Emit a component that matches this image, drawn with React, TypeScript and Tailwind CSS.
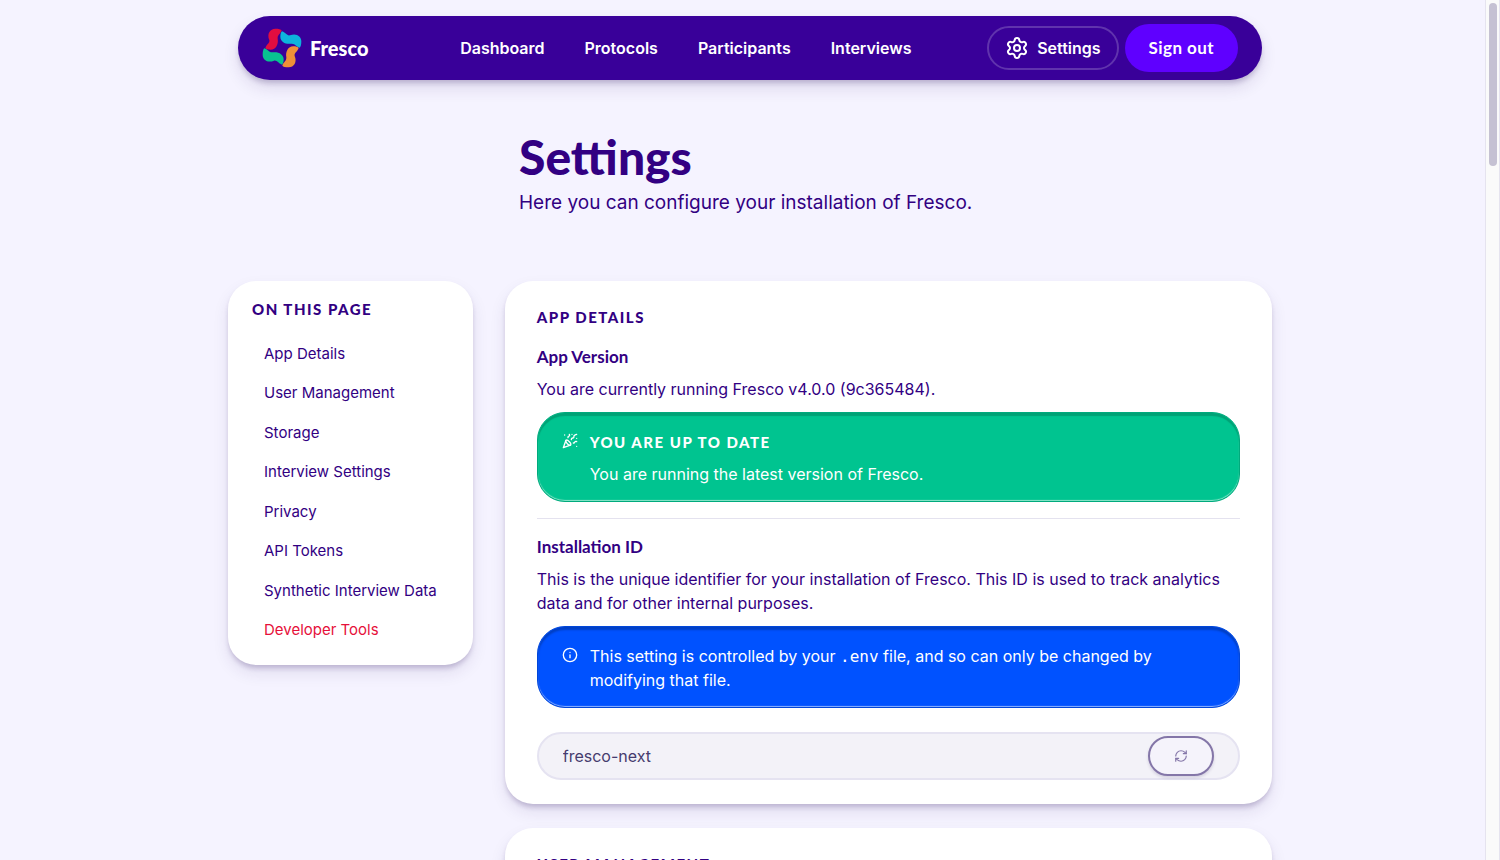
import { clsx } from "clsx";
import { Info, PartyPopper, RefreshCw, Settings } from "lucide-react";
import type { ReactNode } from "react";

const NAV_ITEMS = ["Dashboard", "Protocols", "Participants", "Interviews"];

const SECTIONS = [
  { id: "app-details", title: "App Details" },
  { id: "user-management", title: "User Management" },
  { id: "storage", title: "Storage" },
  { id: "interview-settings", title: "Interview Settings" },
  { id: "privacy", title: "Privacy" },
  { id: "api-tokens", title: "API Tokens" },
  { id: "synthetic-interview-data", title: "Synthetic Interview Data" },
  { id: "developer-tools", title: "Developer Tools", danger: true },
];

const LOGO_ARM =
  "M-50 0C-46 -12 -36 -14 -38 -24C-46 -42 -36 -58 -20 -58C-10 -58 -3 -56 -1 -53C-4 -42 -14 -40 -13 -28C-10 -12 -18 5 -34 5C-42 5 -48 3 -50 0Z";

function Logo() {
  return (
    <svg viewBox="-60 -60 120 120" className="size-10" aria-hidden="true">
      <path d={LOGO_ARM} fill="#e20d40" />
      <path d={LOGO_ARM} fill="#0db4dc" transform="rotate(90)" />
      <path d={LOGO_ARM} fill="#ef9038" transform="rotate(180)" />
      <path d={LOGO_ARM} fill="#08c391" transform="rotate(270)" />
    </svg>
  );
}

function Heading({ children }: { children: ReactNode }) {
  return (
    <h2 className="font-['Lato',sans-serif] text-[15px] leading-6 font-black tracking-widest uppercase">
      {children}
    </h2>
  );
}

function Card({ id, title, children }: { id: string; title: string; children?: ReactNode }) {
  return (
    <section
      id={id}
      className="rounded-[28px] bg-white px-8 py-6 shadow-[0_4px_5px_-1px_rgba(48,25,95,0.22),0_8px_16px_rgba(48,25,95,0.1)]"
    >
      <Heading>{title}</Heading>
      {children}
    </section>
  );
}

function Field({ title, text, children }: { title: string; text: string; children: ReactNode }) {
  return (
    <div>
      <h3 className="font-['Lato',sans-serif] text-[17px] leading-6 font-bold">{title}</h3>
      <p className="mt-2 mb-[11px] leading-6">{text}</p>
      {children}
    </div>
  );
}

function Alert({
  variant,
  icon,
  children,
}: {
  variant: "success" | "info";
  icon: ReactNode;
  children: ReactNode;
}) {
  return (
    <div
      role="status"
      className={clsx(
        "flex gap-3 rounded-[28px] border px-6 pt-[17px] pb-[15px] leading-6 text-white",
        variant === "success" &&
          "border-[#00aa7d] bg-[#00c490] shadow-[inset_0_3px_1px_#00a276,inset_0_-1px_1px_#8ee6cb]",
        variant === "info" &&
          "border-[#0046da] bg-[#0052ff] shadow-[inset_0_3px_2px_#003fc4,inset_0_-1px_1px_#8fb4ff]",
      )}
    >
      <span className="flex h-6 shrink-0 items-start pt-[3px]">{icon}</span>
      <div>{children}</div>
    </div>
  );
}

function Header() {
  return (
    <header className="mx-auto flex h-16 max-w-5xl items-center justify-between rounded-full bg-[#390099] px-6 text-white shadow-[0_4px_5px_-1px_rgba(48,25,95,0.22),0_8px_16px_rgba(48,25,95,0.12)]">
      <a
        href="#"
        className="flex items-center gap-2 pr-4 font-['Lato',sans-serif] text-xl font-black"
      >
        <Logo />
        Fresco
      </a>
      <nav className="flex gap-10 font-semibold">
        {NAV_ITEMS.map((item) => (
          <a key={item} href="#">
            {item}
          </a>
        ))}
      </nav>
      <div className="flex items-center gap-1.5">
        <a
          href="#"
          className="flex h-11 items-center gap-2 rounded-full border-2 border-white/20 px-4 font-semibold"
        >
          <Settings className="size-6" aria-hidden="true" />
          Settings
        </a>
        <button
          type="button"
          className="h-12 rounded-full bg-[#5f00ff] px-6 font-['Lato',sans-serif] text-[17px] font-bold tracking-wide"
        >
          Sign out
        </button>
      </div>
    </header>
  );
}

export default function App() {
  return (
    <div className="relative h-screen overflow-hidden bg-[#f5f3ff] pt-4 font-['Inter',sans-serif] text-base text-[#320082]">
      <Header />

      <div className="mx-auto mt-12 max-w-[462px]">
        <h1 className="font-['Lato',sans-serif] text-5xl leading-[58px] font-black">Settings</h1>
        <p className="text-[19px] leading-[34px]">
          Here you can configure your installation of Fresco.
        </p>
      </div>

      <div className="mx-auto mt-[61px] flex max-w-[1044px] items-start gap-8">
        <aside className="flex-1 rounded-[28px] bg-white px-6 pt-4 pb-[19px] shadow-[0_4px_5px_-1px_rgba(48,25,95,0.22),0_8px_16px_rgba(48,25,95,0.1)]">
          <Heading>On this page</Heading>
          <ul className="mt-[17px] flex min-h-[308px] flex-col justify-between">
            {SECTIONS.map((section) => (
              <li key={section.id}>
                <a
                  href={`#${section.id}`}
                  className={clsx(
                    "block px-3 py-1.5 text-[15px] leading-5 whitespace-nowrap",
                    section.danger && "text-[#e6103a]",
                  )}
                >
                  {section.title}
                </a>
              </li>
            ))}
          </ul>
        </aside>

        <main className="flex w-full max-w-3xl flex-col gap-6">
          <Card id="app-details" title="App Details">
            <div className="mt-4">
              <Field
                title="App Version"
                text="You are currently running Fresco v4.0.0 (9c365484)."
              >
                <Alert
                  variant="success"
                  icon={<PartyPopper className="size-4" aria-hidden="true" />}
                >
                  <Heading>You are up to date</Heading>
                  <p className="mt-2">You are running the latest version of Fresco.</p>
                </Alert>
              </Field>

              <hr className="my-4 border-[#e4e2ef]" />

              <Field
                title="Installation ID"
                text="This is the unique identifier for your installation of Fresco. This ID is used to track analytics data and for other internal purposes."
              >
                <Alert variant="info" icon={<Info className="size-4" aria-hidden="true" />}>
                  <p>
                    This setting is controlled by your{" "}
                    <code className="font-['DejaVu_Sans_Mono',monospace] text-base leading-none">
                      .env
                    </code>{" "}
                    file, and so can only be changed by modifying that file.
                  </p>
                </Alert>
                <div className="mt-6 flex h-12 items-center rounded-full border-2 border-[#e5e3f1] bg-[#f3f2f8] px-6">
                  <input
                    type="text"
                    aria-label="Installation ID"
                    readOnly
                    value="fresco-next"
                    className="min-w-0 flex-1 bg-transparent text-[#463c6e] outline-none"
                  />
                  <button
                    type="button"
                    aria-label="Regenerate"
                    className="grid h-10 w-[66px] place-items-center rounded-full border-2 border-[#8476a8] bg-[#f5f3fb] text-[#8476a8] shadow-[0_2px_3px_rgba(48,25,95,0.15)]"
                  >
                    <RefreshCw className="size-3.5" aria-hidden="true" />
                  </button>
                </div>
              </Field>
            </div>
          </Card>

          <Card id="user-management" title="User Management" />
        </main>
      </div>

      {/* scroll track */}
      <div className="absolute inset-y-0 right-0 w-[15px] border-x border-[#e5e3ef] bg-[#fafafa] px-[3px] py-[3px]">
        <div className="h-[163px] w-2 rounded-full bg-[#c5c1d3]" />
      </div>
    </div>
  );
}
